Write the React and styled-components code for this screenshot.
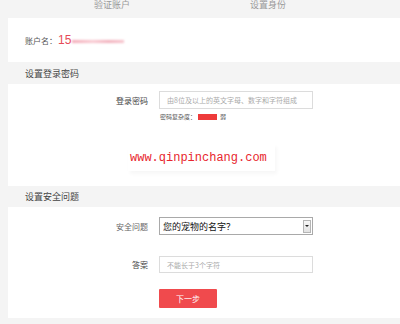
import React from "react"
import styled, { createGlobalStyle } from "styled-components"

const GlobalStyle = createGlobalStyle`
    html, body {
        margin: 0;
        padding: 0;
        background: #f4f4f4;
        font-family: "Noto Sans CJK SC", "Liberation Sans", sans-serif;
    }
`;

const Page = styled.div`
    width: 400px;
    height: 324px;
    overflow: hidden;
    background: #f4f4f4;
`;

const TabBar = styled.div`
    height: 18px;
    display: flex;
    padding-left: 34px;
    background: #f4f4f4;
`;

const Tab = styled.div`
    width: 156px;
    text-align: center;
    font-size: 9px;
    line-height: 10px;
    color: #999;
`;

const Card = styled.div`
    margin-left: 8px;
    background: #fff;
    padding-bottom: 10px;
`;

const AccountRow = styled.div`
    height: 44px;
    display: flex;
    align-items: center;
    padding-left: 17px;
    font-size: 8px;
    color: #555;
`;

const AccountNum = styled.span`
    color: #e64a57;
    font-size: 12px;
    font-family: "Liberation Sans", sans-serif;
    margin-left: 1px;
`;

const Blur = styled.span`
    display: inline-block;
    width: 52px;
    height: 3px;
    margin-left: 1px;
    margin-top: 2px;
    background: linear-gradient(90deg, #f3a9b6, #f8c9d1 40%, #f1b0bc 70%, #f7c4cd);
    filter: blur(0.8px);
`;

const SectionHeader = styled.div`
    height: ${({ $h }) => $h}px;
    margin-top: ${({ $mt }) => $mt || 0}px;
    display: flex;
    align-items: center;
    padding-left: 17px;
    background: #f4f4f4;
    font-size: 9px;
    color: #444;
`;

const FormRow = styled.div`
    display: grid;
    grid-template-columns: 140px 154px;
    column-gap: 11px;
    align-items: center;
    margin-top: ${({ $mt }) => $mt}px;
`;

const Label = styled.div`
    text-align: right;
    font-size: 8px;
    color: ${({ $dark }) => ($dark ? "#444" : "#666")};
`;

const Input = styled.div`
    height: ${({ $h }) => $h}px;
    box-sizing: border-box;
    border: 1px solid #dcdcdc;
    padding-left: 7px;
    display: flex;
    align-items: center;
    font-size: 7px;
    color: #aaa;
`;

const Hint = styled.div`
    margin-top: 4px;
    padding-left: 152px;
    display: flex;
    align-items: center;
    font-size: 6px;
    color: #555;
    height: 7px;
`;

const Strength = styled.span`
    display: inline-block;
    width: 19px;
    height: 6px;
    margin: 0 3px 0 2px;
    background: #ee3b3b;
`;

const MarkWrap = styled.div`
    margin-top: 24px;
    padding-left: 120px;
`;

const Mark = styled.div`
    width: 147px;
    height: 27px;
    display: flex;
    align-items: center;
    padding-left: 2px;
    box-sizing: border-box;
    background: #fff;
    box-shadow: 2px 3px 4px rgba(0, 0, 0, 0.035);
    font-family: "Liberation Mono", monospace;
    font-size: 12px;
    color: #e8262e;
`;

const Select = styled.div`
    height: 18px;
    box-sizing: border-box;
    border: 1px solid #a9a9a9;
    display: flex;
    align-items: center;
    justify-content: space-between;
    padding: 0 1px 0 3px;
    font-size: 9px;
    color: #111;
`;

const ArrowBox = styled.div`
    width: 8px;
    height: 13px;
    box-sizing: border-box;
    border: 1px solid #b5b5b5;
    background: linear-gradient(#f6f6f6, #e2e2e2);
    display: flex;
    align-items: center;
    justify-content: center;
`;

const Arrow = styled.span`
    width: 0;
    height: 0;
    border-left: 2px solid transparent;
    border-right: 2px solid transparent;
    border-top: 2px solid #222;
`;

const Button = styled.button`
    width: 58px;
    height: 19px;
    border: none;
    border-radius: 1px;
    background: #f04a4d;
    color: #fff;
    font-family: inherit;
    font-size: 8px;
    padding: 0;
`;

const App = () => {
    return (
        <>
            <GlobalStyle />
            <Page>
                <TabBar>
                    <Tab>验证账户</Tab>
                    <Tab>设置身份</Tab>
                </TabBar>
                <Card>
                    <AccountRow>
                        账户名：<AccountNum>15</AccountNum><Blur />
                    </AccountRow>
                    <SectionHeader $h={22}>设置登录密码</SectionHeader>
                    <FormRow $mt={7}>
                        <Label $dark>登录密码</Label>
                        <Input $h={18}>由8位及以上的英文字母、数字和字符组成</Input>
                    </FormRow>
                    <Hint>密码复杂度：<Strength />弱</Hint>
                    <MarkWrap>
                        <Mark>www.qinpinchang.com</Mark>
                    </MarkWrap>
                    <SectionHeader $h={21} $mt={15}>设置安全问题</SectionHeader>
                    <FormRow $mt={10}>
                        <Label>安全问题</Label>
                        <Select>
                            您的宠物的名字？
                            <ArrowBox><Arrow /></ArrowBox>
                        </Select>
                    </FormRow>
                    <FormRow $mt={21}>
                        <Label $dark>答案</Label>
                        <Input $h={17}>不能长于3个字符</Input>
                    </FormRow>
                    <FormRow $mt={16}>
                        <span />
                        <Button>下一步</Button>
                    </FormRow>
                </Card>
            </Page>
        </>
    );
};

export default App;
